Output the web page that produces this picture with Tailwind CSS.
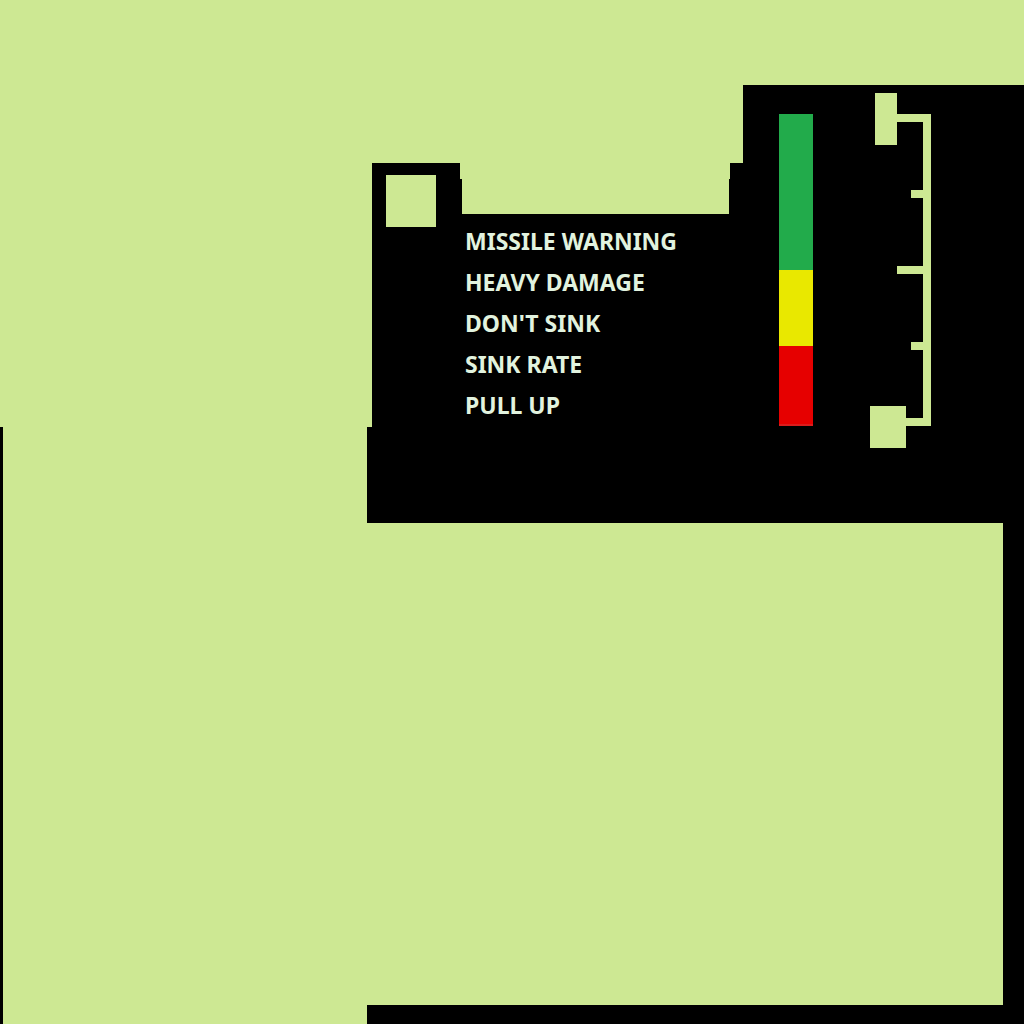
<!DOCTYPE html>
<html lang="en">
<head>
<meta charset="utf-8">
<meta name="viewport" content="width=device-width, initial-scale=1">
<title>Warning panel</title>
<script src="https://cdn.jsdelivr.net/npm/@tailwindcss/browser@4"></script>
</head>
<body class="flex min-h-screen flex-col bg-[#cde893] font-['Noto_Sans',sans-serif]">
  <header class="flex items-stretch pt-[85px] pl-[372px]">
    <!-- Status lamp -->
    <div class="mt-[78px] flex w-[90px] shrink-0 flex-col">
      <div class="h-4 w-[88px] bg-black"></div>
      <div class="flex-1 bg-black pl-[14px]">
        <div class="-mt-1 h-[52px] w-[50px] bg-[#cde893]"></div>
      </div>
    </div>
    <!-- Warning messages -->
    <ul class="mt-[129px] w-[267px] shrink-0 bg-black pt-[7px] pl-[3px] text-[23px] leading-[41px] font-bold whitespace-nowrap text-[#e2f3df]">
      <li>MISSILE WARNING</li>
      <li>HEAVY DAMAGE</li>
      <li>DON'T SINK</li>
      <li>SINK RATE</li>
      <li>PULL UP</li>
    </ul>
    <div class="mt-[78px] flex w-[14px] shrink-0 flex-col items-end">
      <div class="h-4 w-[13px] bg-black"></div>
      <div class="w-full flex-1 bg-black"></div>
    </div>
    <!-- Colour bar and scale -->
    <div class="flex h-[342px] flex-1 bg-black pl-9">
      <div class="mt-[29px] flex h-[312px] w-[34px] shrink-0 flex-col">
        <div class="h-[156px] bg-[#22ab4b]"></div>
        <div class="h-[76px] bg-[#e9e800]"></div>
        <div class="flex-1 border-b-2 border-[#dc1c1c] bg-[#e60000]"></div>
      </div>
      <div class="mt-2 ml-[57px] flex h-[355px] w-9 shrink-0 flex-col justify-between">
        <div class="ml-[5px] h-[52px] w-[22px] bg-[#cde893]"></div>
        <div class="relative h-[42px] bg-[#cde893]"></div>
      </div>
      <div class="mt-[29px] -ml-[9px] flex h-[312px] w-[34px] shrink-0 flex-col items-end justify-between border-r-8 border-[#cde893]">
        <div class="h-2 w-[26px] bg-[#cde893]"></div>
        <div class="h-2 w-3 bg-[#cde893]"></div>
        <div class="h-2 w-[26px] bg-[#cde893]"></div>
        <div class="h-2 w-3 bg-[#cde893]"></div>
        <div class="h-2 w-[26px] bg-[#cde893]"></div>
      </div>
    </div>
  </header>
  <main class="flex flex-1 border-l-[3px] border-black pl-[364px]">
    <div class="flex flex-1 flex-col bg-black pt-24 pr-[21px] pb-[19px]">
      <div class="flex-1 bg-[#cde893]"></div>
    </div>
  </main>
</body>
</html>
